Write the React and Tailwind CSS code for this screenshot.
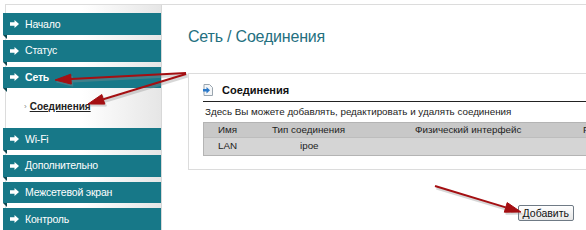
import React from "react";

const Arrow = () => (
  <svg width="9" height="8" viewBox="0 0 9 8" className="shrink-0">
    <path d="M0 2.3h4.5V0L9 4 4.5 8V5.7H0z" fill="white" />
  </svg>
);

function Item({ label, bold }) {
  return (
    <div className="relative h-[22px] bg-[#177888] flex items-center pl-[7px] gap-[6px]">
      <Arrow />
      <span className={"text-[10.5px] text-white leading-none tracking-[-0.2px] " + (bold ? "font-bold" : "")}>{label}</span>
      <span className="absolute left-0 top-full w-0 h-0 border-t-[4px] border-t-[#0c4750] border-l-[4px] border-l-transparent" />
    </div>
  );
}

export default function App() {
  return (
    <div className="relative w-[586px] h-[230px] overflow-hidden bg-white" style={{ fontFamily: "'Liberation Sans', Arial, sans-serif" }}>
      <div className="mt-[4px] ml-[5px] border-t border-[#dcdcdc] flex h-[226px]">
        {/* Sidebar */}
        <div className="-ml-[2px] w-[158px] shrink-0 flex flex-col gap-[5px] pt-[8px] bg-gradient-to-r from-white via-white to-[#e6e6e6] shadow-[inset_2px_0_0_white,inset_3px_0_0_#dcdcdc]">
          <Item label="Начало" />
          <Item label="Статус" />
          <Item label="Сеть" bold />
          <div className="h-[30px] flex items-start pt-[8px] pl-[21px] gap-[3px]">
            <span className="text-[8px] text-[#888] leading-[11px]">›</span>
            <span className="text-[10px] font-bold text-[#222] underline leading-[11px]">Соединения</span>
          </div>
          <Item label="Wi-Fi" />
          <Item label="Дополнительно" />
          <Item label="Межсетевой экран" />
          <Item label="Контроль" />
        </div>
        <div className="w-px bg-[#d8d8d8] shrink-0" />
        {/* Content */}
        <div className="flex-1 pl-[26px] pt-[23px]">
          <div className="text-[16px] text-[#24707f] leading-[18px] tracking-[-0.2px]">Сеть / Соединения</div>
          <div className="mt-[27px] border border-r-0 border-[#dcdcdc] h-[97px] pl-[14px] pt-[8px]">
            <div className="flex items-center gap-[9px] h-[16px]">
              <svg width="10" height="12" viewBox="0 0 10 12">
                <path d="M1 0.5h5.5L9.5 3.5V11.5H1z" fill="#f4f6f8" stroke="#9aa5ae" />
                <path d="M0 5h3.5V3L7 6.2 3.5 9.4V7.4H0z" fill="#2a78c8" />
              </svg>
              <span className="text-[11px] font-bold text-[#111] leading-none">Соединения</span>
            </div>
            <div className="mt-[3px] h-px bg-[#222]" />
            <div className="text-[9.8px] text-[#222] leading-[12px] mt-[4px] pl-[2px]">Здесь Вы можете добавлять, редактировать и удалять соединения</div>
            <div className="mt-[4px] border border-r-0 border-[#b4b4b4] text-[9.8px] text-[#222]">
              <div className="flex h-[15px] items-center bg-[#c8c8c8] border-b border-[#bdbdbd]">
                <span className="w-[68px] pl-[14px]">Имя</span>
                <span className="w-[143px]">Тип соединения</span>
                <span className="w-[168px]">Физический интерфейс</span>
                <span>F</span>
              </div>
              <div className="flex h-[17px] items-center bg-[#d5d5d5]">
                <span className="w-[96px] pl-[14px]">LAN</span>
                <span>ipoe</span>
              </div>
            </div>
          </div>
          <div className="flex justify-end pr-[15px] mt-[35px]">
            <button className="h-[16px] px-[4px] border border-[#6f7a85] rounded-[2px] bg-gradient-to-b from-white to-[#e6e6e6] text-[10.5px] text-[#111] leading-none">Добавить</button>
          </div>
        </div>
      </div>
      {/* Annotation arrows */}
      <svg className="absolute inset-0 pointer-events-none" width="586" height="230">
        <g fill="#8e8e8e" stroke="#8e8e8e" opacity="0.35" transform="translate(1.5,2)">
          <path d="M186 73 L71 79" strokeWidth="3" fill="none" />
          <polygon points="55,80 70.7,74.2 71.3,84.1" />
          <path d="M186 74 L103.3 99.3" strokeWidth="3" fill="none" />
          <polygon points="88,104 101.8,94.5 104.8,104.1" />
          <path d="M435 186 L505.7 207.4" strokeWidth="3" fill="none" />
          <polygon points="521,212 504.3,212.2 507.2,202.6" />
        </g>
        <g fill="#a40f12" stroke="#a40f12">
          <path d="M186 73 L71 79" strokeWidth="2" fill="none" />
          <polygon points="55,80 70.7,74.2 71.3,84.1" />
          <path d="M186 74 L103.3 99.3" strokeWidth="2" fill="none" />
          <polygon points="88,104 101.8,94.5 104.8,104.1" />
          <path d="M435 186 L505.7 207.4" strokeWidth="2" fill="none" />
          <polygon points="521,212 504.3,212.2 507.2,202.6" />
        </g>
      </svg>
    </div>
  );
}
